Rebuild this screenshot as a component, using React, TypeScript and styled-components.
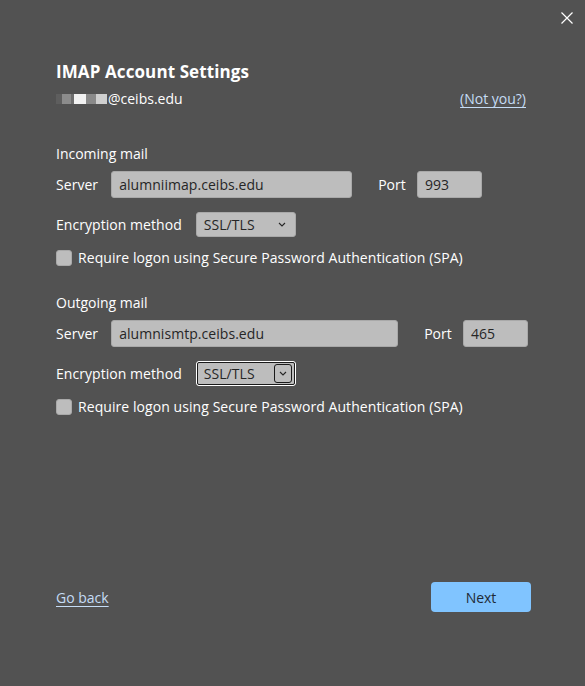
import * as React from 'react';
import styled, { createGlobalStyle } from 'styled-components';

const GlobalStyle = createGlobalStyle`
    html, body {
        margin: 0;
        padding: 0;
        background: #525252;
    }
    body {
        font-family: "Open Sans", "Noto Sans", "Liberation Sans", sans-serif;
        color: #ffffff;
    }
`;

const Dialog = styled.div`
    position: relative;
    width: 585px;
    height: 686px;
    box-sizing: border-box;
    background: #525252;
    padding: 60px 54px 0 56px;
    display: flex;
    flex-direction: column;
`;

const Close = styled.button`
    position: absolute;
    top: 11px;
    right: 11px;
    width: 14px;
    height: 14px;
    padding: 0;
    border: none;
    background: transparent;
    cursor: pointer;
`;

const Title = styled.h1`
    margin: 0;
    font-size: 17px;
    font-weight: 700;
    line-height: 24px;
    letter-spacing: 0.1px;
`;

const AccountRow = styled.div`
    display: flex;
    justify-content: space-between;
    align-items: center;
    margin-top: 5px;
    padding-right: 5px;
    font-size: 14px;
    line-height: 20px;
`;

const Email = styled.span`
    display: flex;
    align-items: center;
`;

// blurred-out user name in front of the address
const Blur = styled.span`
    display: inline-block;
    width: 51px;
    height: 10px;
    margin-right: 1px;
    background: linear-gradient(90deg, #5e5e5e 0 12%, #8c8c8c 12% 30%, #6e6e6e 30% 36%, #f2f2f2 36% 58%, #8a8a8a 58% 78%, #cfcfcf 78% 100%);
    filter: blur(0.6px);
`;

const Link = styled.a`
    color: #c5dcf5;
    text-decoration: underline;
    text-underline-offset: 3px;
    font-size: 14px;
    cursor: pointer;
`;

const Section = styled.section<{ $gap: number }>`
    margin-top: ${p => p.$gap}px;
    display: flex;
    flex-direction: column;
`;

const SectionTitle = styled.div`
    font-size: 14px;
    line-height: 20px;
`;

const Row = styled.div<{ $top: number }>`
    display: flex;
    align-items: center;
    margin-top: ${p => p.$top}px;
    font-size: 14px;
    letter-spacing: 0.05px;
`;

const Label = styled.span<{ $gap: number }>`
    margin-right: ${p => p.$gap}px;
    white-space: nowrap;
`;

const TextBox = styled.div<{ $width: number }>`
    width: ${p => p.$width}px;
    height: 27px;
    box-sizing: border-box;
    padding: 0 7px;
    display: flex;
    align-items: center;
    background: #bdbdbd;
    border: 1px solid #a9a9a9;
    border-radius: 3px;
    color: #262626;
    font-size: 14px;
`;

const PortLabel = styled.span`
    margin-left: 26px;
    margin-right: 11px;
`;

const Select = styled.div<{ $focused?: boolean }>`
    width: 100px;
    height: 25px;
    box-sizing: border-box;
    padding: 0 4px 0 7px;
    display: flex;
    align-items: center;
    justify-content: space-between;
    background: #bdbdbd;
    border: 1px solid ${p => (p.$focused ? '#ffffff' : '#a9a9a9')};
    outline: ${p => (p.$focused ? '1px solid #1a1a1a' : 'none')};
    outline-offset: -2px;
    border-radius: 3px;
    color: #262626;
    font-size: 14px;
`;

const Caret = styled.span<{ $focused?: boolean }>`
    width: 18px;
    height: 19px;
    box-sizing: border-box;
    display: flex;
    align-items: center;
    justify-content: center;
    margin-right: ${p => (p.$focused ? '-1px' : '0')};
    border: ${p => (p.$focused ? '1px solid #1a1a1a' : 'none')};
    border-radius: 3px;
`;

const CheckRow = styled.label<{ $top: number }>`
    display: flex;
    align-items: center;
    gap: 6px;
    margin-top: ${p => p.$top}px;
    font-size: 14px;
    line-height: 20px;
    letter-spacing: 0.07px;
`;

const Box = styled.span`
    width: 16px;
    height: 16px;
    box-sizing: border-box;
    background: #bdbdbd;
    border: 1px solid #a9a9a9;
    border-radius: 3px;
`;

const Footer = styled.div`
    margin-top: auto;
    margin-bottom: 74px;
    display: flex;
    justify-content: space-between;
    align-items: center;
`;

const NextButton = styled.button`
    width: 100px;
    height: 30px;
    border: none;
    border-radius: 4px;
    background: #80c4ff;
    color: #1f2a36;
    font-family: inherit;
    font-size: 14px;
    cursor: pointer;
`;

const Chevron = () => (
    <svg width="8" height="5" viewBox="0 0 8 5">
        <path d="M1 1 L4 4 L7 1" fill="none" stroke="#262626" strokeWidth="1.1" />
    </svg>
);

const EncryptionSelect: React.FC<{ focused?: boolean }> = ({ focused }) => (
    <Select $focused={focused}>
        <span>SSL/TLS</span>
        <Caret $focused={focused}>
            <Chevron />
        </Caret>
    </Select>
);

const MailSection: React.FC<{
    title: string;
    server: string;
    serverWidth: number;
    port: string;
    focused?: boolean;
    gap: number;
}> = ({ title, server, serverWidth, port, focused, gap }) => (
    <Section $gap={gap}>
        <SectionTitle>{title}</SectionTitle>
        <Row $top={7}>
            <Label $gap={13}>Server</Label>
            <TextBox $width={serverWidth}>{server}</TextBox>
            <PortLabel>Port</PortLabel>
            <TextBox $width={65}>{port}</TextBox>
        </Row>
        <Row $top={14}>
            <Label $gap={14}>Encryption method</Label>
            <EncryptionSelect focused={focused} />
        </Row>
        <CheckRow $top={11}>
            <Box />
            Require logon using Secure Password Authentication (SPA)
        </CheckRow>
    </Section>
);

export default function App() {
    return (
        <>
            <GlobalStyle />
            <Dialog>
                <Close aria-label="Close">
                    <svg width="14" height="14" viewBox="0 0 14 14">
                        <path d="M1.5 1.5 L12.5 12.5 M12.5 1.5 L1.5 12.5" stroke="#ffffff" strokeWidth="1.2" />
                    </svg>
                </Close>
                <Title>IMAP Account Settings</Title>
                <AccountRow>
                    <Email>
                        <Blur />
                        @ceibs.edu
                    </Email>
                    <Link>(Not you?)</Link>
                </AccountRow>
                <MailSection
                    gap={35}
                    title="Incoming mail"
                    server="alumniimap.ceibs.edu"
                    serverWidth={241}
                    port="993"
                />
                <MailSection
                    gap={25}
                    title="Outgoing mail"
                    server="alumnismtp.ceibs.edu"
                    serverWidth={287}
                    port="465"
                    focused
                />
                <Footer>
                    <Link>Go back</Link>
                    <NextButton>Next</NextButton>
                </Footer>
            </Dialog>
        </>
    );
}
